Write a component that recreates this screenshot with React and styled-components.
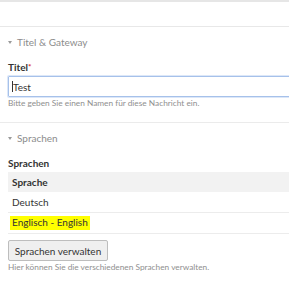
import React from 'react';
import styled, { createGlobalStyle } from 'styled-components';

const Global = createGlobalStyle`
  html, body { margin: 0; padding: 0; background: #fff; overflow: hidden; }
  body { font-family: Lato, "Open Sans", sans-serif; color: #333; }
`;

const Page = styled.div`
  width: 330px;
`;

const TopStrip = styled.div`
  height: 2px;
  background: #e6e6e6;
`;

const Header = styled.div`
  height: 24px;
  border-bottom: 1px solid #e8e8e8;
`;

const Section = styled.section`
  padding: 8px 0 0 8px;
  border-bottom: ${p => (p.last ? 'none' : '1px solid #ebebeb')};
  padding-bottom: ${p => (p.last ? '20px' : '13px')};
`;

const Toggle = styled.div`
  display: flex;
  align-items: center;
  gap: 4px;
  height: 14px;
  font-size: 10px;
  color: #8c8c8c;
  margin-bottom: 11px;

  &::before {
    content: '';
    width: 0;
    height: 0;
    border-left: 2.5px solid transparent;
    border-right: 2.5px solid transparent;
    border-top: 3px solid #9a9a9a;
    margin-right: 1px;
  }
`;

const Label = styled.div`
  font-size: 10px;
  font-weight: 700;
  color: #333;
  line-height: 14px;
  margin-bottom: 2px;

  em {
    color: #d9312b;
    font-style: normal;
    font-size: 8px;
    vertical-align: top;
  }
`;

const Input = styled.div`
  height: 19px;
  border: 1px solid #a6c1ea;
  box-shadow: 0 0 0 1px #dce7f8;
  border-radius: 1px;
  display: flex;
  align-items: center;
  padding-left: 3px;
  font-size: 10px;
  color: #333;
`;

const Caret = styled.span`
  display: inline-block;
  width: 1px;
  height: 11px;
  background: #333;
`;

const Help = styled.div`
  font-size: 8.3px;
  color: #8f8f8f;
  line-height: 12px;
`;

const Table = styled.div`
  display: flex;
  flex-direction: column;
`;

const Row = styled.div`
  height: 20px;
  display: flex;
  align-items: center;
  padding-left: 4px;
  font-size: 10px;
  font-weight: ${p => (p.head ? 700 : 400)};
  background: ${p => (p.head ? '#f2f2f2' : 'transparent')};
  border-bottom: ${p => (p.head ? 'none' : '1px solid #ececec')};
`;

const Mark = styled.span`
  background: #ffff00;
  padding: 1px 2px 2px;
  margin-left: -2px;
  line-height: 11px;
`;

const Button = styled.button`
  margin-top: 6px;
  width: 100px;
  height: 21px;
  border: 1px solid #bdbdbd;
  border-radius: 2px;
  background: #efefef;
  font-family: Lato, sans-serif;
  font-size: 10px;
  color: #333;
  padding: 0;
`;

export default function App() {
  return (
    <Page>
      <Global />
      <TopStrip />
      <Header />
      <Section>
        <Toggle>Titel &amp; Gateway</Toggle>
        <Label>
          Titel<em>*</em>
        </Label>
        <Input>
          <Caret />
          Test
        </Input>
        <Help>Bitte geben Sie einen Namen für diese Nachricht ein.</Help>
      </Section>
      <Section last>
        <Toggle>Sprachen</Toggle>
        <Label>Sprachen</Label>
        <Table>
          <Row head>Sprache</Row>
          <Row>Deutsch</Row>
          <Row>
            <Mark>Englisch - English</Mark>
          </Row>
        </Table>
        <Button>Sprachen verwalten</Button>
        <Help>Hier können Sie die verschiedenen Sprachen verwalten.</Help>
      </Section>
    </Page>
  );
}
